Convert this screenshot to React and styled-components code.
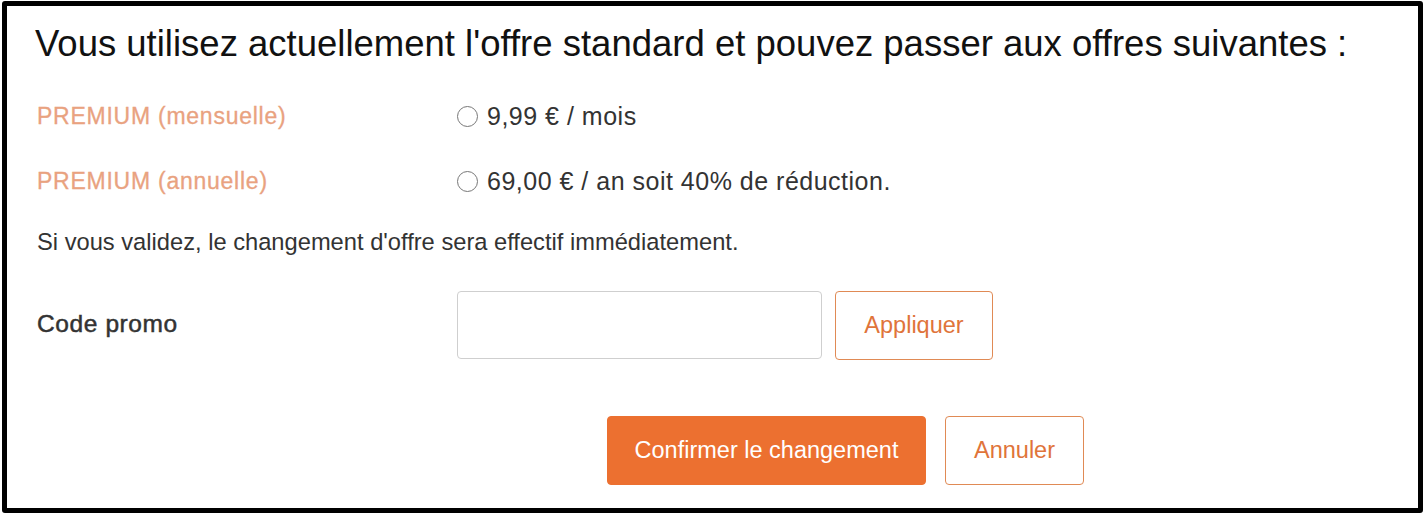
import React, { useState } from 'react';
import styled, { createGlobalStyle } from 'styled-components';

const GlobalStyle = createGlobalStyle`
  html, body {
    margin: 0;
    padding: 0;
    background: #fff;
  }
  body {
    font-family: "Liberation Sans", Arial, sans-serif;
  }
`;

const Frame = styled.div`
  box-sizing: border-box;
  width: 1421px;
  height: 512px;
  margin: 1px 0 0 2px;
  border: 5px solid #000;
  border-radius: 3px;
  padding: 16px 28px 0 30px;
`;

const Title = styled.h1`
  margin: 0;
  font-weight: normal;
  font-size: 36.5px;
  line-height: 44px;
  color: #111;
  margin-left: -2px;
`;

const Form = styled.div`
  display: grid;
  grid-template-columns: 420px 1fr;
  align-items: center;
  margin-top: 18px;
`;

const OfferLabel = styled.div`
  font-size: 23px;
  letter-spacing: 0.75px;
  -webkit-text-stroke: 0.3px #e9a280;
  color: #e9a280;
  height: 65px;
  display: flex;
  align-items: center;
`;

const OfferChoice = styled.label`
  display: flex;
  align-items: center;
  gap: 9px;
  font-size: 25px;
  letter-spacing: 0.5px;
  color: #333;
  height: 65px;
  cursor: pointer;
`;

const Radio = styled.span`
  box-sizing: border-box;
  flex: none;
  width: 21px;
  height: 21px;
  border-radius: 50%;
  border: 1.5px solid #777;
  background: ${p => (p.checked ? 'radial-gradient(#ec7030 40%, #fff 45%)' : '#fff')};
`;

const Notice = styled.p`
  grid-column: 1 / -1;
  margin: 14px 0 0;
  font-size: 23.7px;
  color: #333;
  line-height: 28px;
`;

const FieldLabel = styled.div`
  margin-top: 32px;
  font-size: 24.5px;
  letter-spacing: 0.6px;
  color: #333;
  -webkit-text-stroke: 0.5px #333;
`;

const PromoRow = styled.div`
  display: flex;
  gap: 13px;
  margin-top: 35px;
`;

const Input = styled.input`
  box-sizing: border-box;
  width: 365px;
  height: 68px;
  border: 1px solid #cfcfcf;
  border-radius: 4px;
  outline: none;
  font-size: 20px;
  padding: 0 12px;
`;

const Button = styled.button`
  box-sizing: border-box;
  width: ${p => p.w}px;
  height: 69px;
  padding: 0;
  border-radius: 4px;
  font-family: inherit;
  font-size: 23.5px;
  cursor: pointer;
  border: 1px solid ${p => (p.primary ? '#ec7030' : '#e08a55')};
  background: ${p => (p.primary ? '#ec7030' : '#fff')};
  color: ${p => (p.primary ? '#fff' : '#e0743a')};
`;

const Actions = styled.div`
  display: flex;
  gap: 19px;
  margin: 56px 0 0 570px;
`;

const offers = [
  { id: 'm', label: 'PREMIUM (mensuelle)', price: '9,99 € / mois' },
  { id: 'a', label: 'PREMIUM (annuelle)', price: '69,00 € / an soit 40% de réduction.' },
];

export default function App() {
  const [selected, setSelected] = useState(null);
  return (
    <>
      <GlobalStyle />
      <Frame>
        <Title>Vous utilisez actuellement l'offre standard et pouvez passer aux offres suivantes :</Title>
        <Form>
          {offers.map(o => (
            <React.Fragment key={o.id}>
              <OfferLabel>{o.label}</OfferLabel>
              <OfferChoice onClick={() => setSelected(o.id)}>
                <Radio checked={selected === o.id} />
                {o.price}
              </OfferChoice>
            </React.Fragment>
          ))}
          <Notice>Si vous validez, le changement d'offre sera effectif immédiatement.</Notice>
          <FieldLabel>Code promo</FieldLabel>
          <PromoRow>
            <Input type="text" />
            <Button w={158}>Appliquer</Button>
          </PromoRow>
        </Form>
        <Actions>
          <Button primary w={319}>Confirmer le changement</Button>
          <Button w={139}>Annuler</Button>
        </Actions>
      </Frame>
    </>
  );
}
